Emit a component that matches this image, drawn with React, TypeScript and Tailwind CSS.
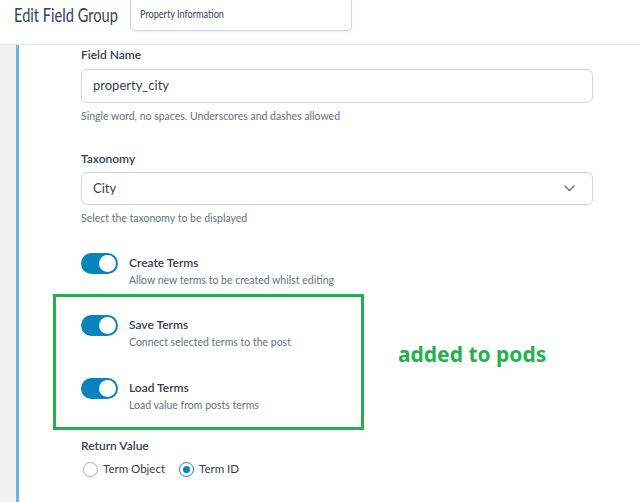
import React from "react";

const font = { fontFamily: 'Lato, "Noto Sans", Arial, sans-serif' };
const boldFont = { fontFamily: '"Noto Sans", "Open Sans", Arial, sans-serif' };

function Toggle() {
  return (
    <div className="flex h-[21px] w-[37px] shrink-0 items-center justify-end rounded-full bg-[#0783be] pr-[2px]">
      <div className="h-[17px] w-[17px] rounded-full bg-white" />
    </div>
  );
}

function ToggleRow({ title, desc }: { title: string; desc: string }) {
  return (
    <div className="flex items-start gap-[11px]">
      <Toggle />
      <div className="flex flex-col pt-[2px]">
        <div className="text-[12px] font-semibold leading-[16px] text-[#344054]">{title}</div>
        <div className="mt-[2px] text-[10.5px] leading-[14px] text-[#667085]">{desc}</div>
      </div>
    </div>
  );
}

function Radio({ checked, label }: { checked?: boolean; label: string }) {
  return (
    <label className="flex items-center gap-[5px]">
      <span
        className={
          checked
            ? "flex h-[15px] w-[15px] items-center justify-center rounded-full border border-[#0783be]"
            : "flex h-[15px] w-[15px] items-center justify-center rounded-full border border-[#a7aaad]"
        }
      >
        {checked && <span className="h-[7px] w-[7px] rounded-full bg-[#0783be]" />}
      </span>
      <span className="text-[11.5px] leading-[16px] text-[#344054]">{label}</span>
    </label>
  );
}

export default function App() {
  return (
    <div className="flex h-[502px] w-[640px] flex-col overflow-hidden bg-[#f0f0f1]" style={font}>
      <header className="flex h-[45px] shrink-0 items-start border-b border-[#e8e8e8] bg-white">
        <div className="w-[130px] shrink-0 pl-[14px]">
          <h1 className="mt-[1px] inline-block origin-left scale-x-[0.77] whitespace-nowrap text-[19px] font-normal leading-[28px] text-[#344054]">
            Edit Field Group
          </h1>
        </div>
        <div className="mt-[-6px] flex h-[37px] w-[222px] items-end rounded-[5px] border border-[#d0d5dd] bg-white pb-[8px] pl-[9px] shadow-[0_1px_2px_rgba(16,24,40,0.08)]">
          <span className="inline-block origin-left scale-x-[0.76] whitespace-nowrap text-[12px] leading-[16px] text-[#344054]">
            Property Information
          </span>
        </div>
      </header>
      <div className="flex flex-1">
        <div className="w-[16px] shrink-0 bg-[#f0f0f1]" />
        <main className="flex flex-1 flex-col border-l-[3px] border-[#6bb6e0] bg-white pl-[62px] pt-[2px]">
          <div className="text-[12px] font-semibold leading-[16px] text-[#344054]">Field Name</div>
          <div className="mt-[6px] flex h-[34px] w-[512px] items-center rounded-[6px] border border-[#d0d5dd] px-[11px]">
            <span className="text-[13px] text-[#344054]">property_city</span>
          </div>
          <div className="mt-[6px] text-[10.5px] leading-[14px] text-[#667085]">
            Single word, no spaces. Underscores and dashes allowed
          </div>

          <div className="mt-[28px] text-[12px] font-semibold leading-[16px] text-[#344054]">Taxonomy</div>
          <div className="mt-[5px] flex h-[33px] w-[512px] items-center justify-between rounded-[6px] border border-[#d0d5dd] pl-[11px] pr-[17px]">
            <span className="text-[13px] text-[#344054]">City</span>
            <svg width="11" height="7" viewBox="0 0 11 7" fill="none">
              <path d="M1 1l4.5 4.5L10 1" stroke="#667085" strokeWidth="1.3" strokeLinecap="round" strokeLinejoin="round" />
            </svg>
          </div>
          <div className="mt-[6px] text-[10.5px] leading-[14px] text-[#667085]">Select the taxonomy to be displayed</div>

          <div className="mt-[28px]">
            <ToggleRow title="Create Terms" desc="Allow new terms to be created whilst editing" />
          </div>

          <div className="mt-[7px] flex items-start">
            <div className="ml-[-28px] flex w-[311px] flex-col gap-[29px] border-[3px] border-[#22b14c] pb-[15px] pl-[25px] pt-[18px]">
              <ToggleRow title="Save Terms" desc="Connect selected terms to the post" />
              <ToggleRow title="Load Terms" desc="Load value from posts terms" />
            </div>
            <div className="ml-[34px] mt-[48px] text-[21px] font-bold leading-[24px] text-[#22b14c]" style={boldFont}>
              added to pods
            </div>
          </div>

          <div className="mt-[8px] text-[12px] font-semibold leading-[16px] text-[#344054]">Return Value</div>
          <div className="ml-[2px] mt-[7px] flex items-center gap-[14px]">
            <Radio label="Term Object" />
            <Radio checked label="Term ID" />
          </div>
        </main>
      </div>
    </div>
  );
}
